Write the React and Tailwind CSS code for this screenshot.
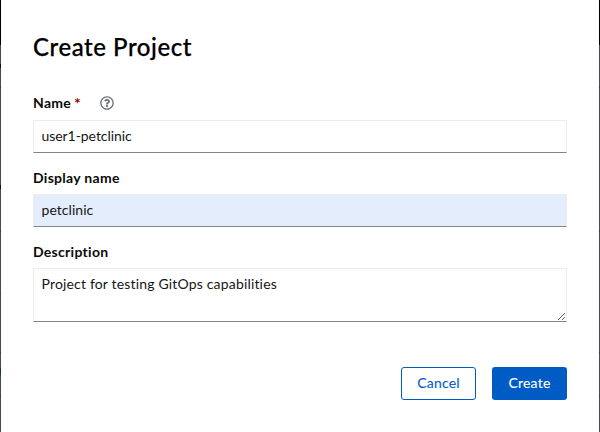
import { FaRegQuestionCircle } from 'react-icons/fa';

function Backdrop({ children }) {
  return <div className="flex w-px shrink-0 flex-col bg-[#4a4a4c]">{children}</div>;
}

function Label({ children }) {
  return <span className="text-[14px] leading-[21px] font-bold tracking-[0.29px] text-[#0a0a0a]">{children}</span>;
}

const field =
  'block w-full rounded-none border border-[#ededed] border-b-[#848484] pr-2 pl-[7.5px] text-[14px] leading-[21px] text-[#151515] outline-none';

export default function App() {
  return (
    <div className="flex h-[432px] w-[600px] overflow-hidden bg-white font-['Lato',sans-serif] text-[#151515] [font-variant-ligatures:none]">
      <Backdrop>
        <div className="h-[45px] bg-black" />
        <div className="mt-[19px] h-1 bg-[#101012]" />
        <div className="mt-[19px] h-px bg-[#333]" />
        <div className="mt-[97px] h-1 bg-[#101012]" />
        <div className="mt-[42px] h-px bg-[#333]" />
        <div className="mt-[61px] h-px bg-[#333]" />
        <div className="mt-[58px] h-px bg-[#333]" />
        <div className="mt-[15px] h-[7px] bg-[#12305a]" />
        <div className="mt-[21px] h-px bg-[#333]" />
      </Backdrop>
      <main className="flex min-w-0 flex-1 flex-col px-8 pt-8">
        <h1 className="h-[31px] text-[24px] leading-[30px] font-medium tracking-[0.55px] text-black [-webkit-text-stroke:0.25px_currentColor]">
          Create Project
        </h1>
        <form className="flex flex-col" onSubmit={(e) => e.preventDefault()}>
          <div className="mt-[29px] flex h-[21px] items-center">
            <Label>Name</Label>
            <span className="ml-[3px] text-[16px] leading-[21px] font-bold text-[#a30000]">*</span>
            <FaRegQuestionCircle className="ml-[19px] size-[14px] text-[#6a6e73]" />
          </div>
          <input
            aria-label="Name"
            className={`${field} mt-[7px] h-[33px] bg-white pb-[2px] tracking-[-0.06px]`}
            defaultValue="user1-petclinic"
          />
          <div className="mt-[14px] flex h-[21px] items-center">
            <Label>Display name</Label>
          </div>
          <input
            aria-label="Display name"
            className={`${field} mt-[6px] h-[33px] bg-[#e4edfc] pb-[2px] tracking-[0.05px]`}
            defaultValue="petclinic"
          />
          <div className="mt-[14px] flex h-[21px] items-center">
            <Label>Description</Label>
          </div>
          <textarea
            aria-label="Description"
            className={`${field} mt-[6px] h-[54px] resize bg-white py-[4px] tracking-[0.17px]`}
            defaultValue="Project for testing GitOps capabilities"
          />
          <div className="mt-[45px] flex justify-end gap-4 text-[14px] leading-[21px] tracking-[0.22px] [-webkit-text-stroke:0.1px_currentColor]">
            <button className="h-[33px] w-[75px] rounded-[3px] border border-[#005cc5] pb-[2px] text-[#005cc5]">Cancel</button>
            <button className="h-[33px] w-[75px] rounded-[3px] bg-[#005cc5] pb-[2px] text-white">Create</button>
          </div>
        </form>
      </main>
      <Backdrop>
        <div className="h-[45px] bg-black" />
        <div className="mt-[42px] h-px bg-[#333]" />
        <div className="mt-[143px] h-px bg-[#333]" />
        <div className="mt-[120px] h-px bg-[#333]" />
        <div className="mt-[43px] h-px bg-[#333]" />
      </Backdrop>
    </div>
  );
}
